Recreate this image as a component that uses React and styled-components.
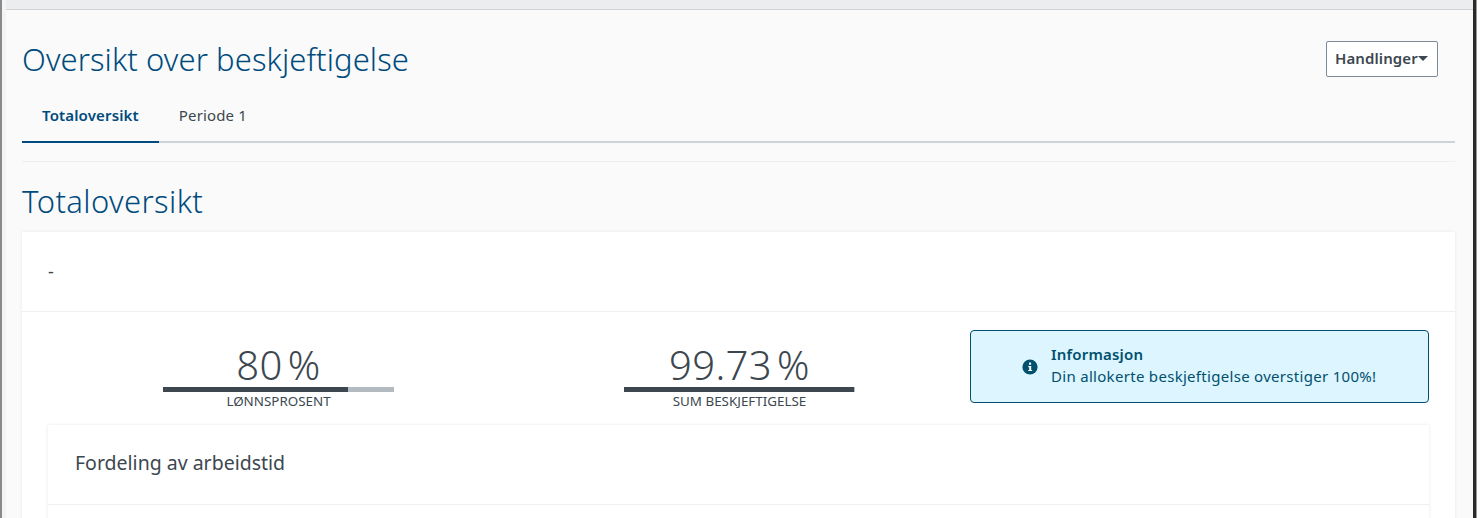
import styled, { createGlobalStyle } from "styled-components";

const GlobalStyle = createGlobalStyle`
  html, body {
    margin: 0;
    padding: 0;
    height: 518px;
    overflow: hidden;
    background: #fff;
    font-family: "Noto Sans", "Open Sans", sans-serif;
  }
`;

const Frame = styled.div`
  height: 518px;
  overflow: hidden;
  display: flex;
  padding-left: 6px;
  padding-right: 4px;
  background: linear-gradient(
    to right,
    #8a8a8a 2px,
    #f4f4f4 2px,
    #f4f4f4 6px,
    #2b2b2b 6px,
    #2b2b2b 1476px,
    #9a9a9a 1476px
  );
`;

const Page = styled.main`
  flex: 1;
  min-width: 0;
  background: #fafafa;
  padding: 0 18px 0 16px;
  border-top: 9px solid #ecedef;
`;

const HeaderRow = styled.div`
  display: flex;
  justify-content: space-between;
  align-items: flex-start;
  border-top: 1px solid #d0d3d6;
  margin: 0 -18px 0 -16px;
  padding: 31px 35px 0 16px;
  height: 52px;
`;

const Title = styled.h1`
  margin: -1px 0 0;
  font-family: "Noto Sans", sans-serif;
  font-weight: 300;
  font-size: 31px;
  line-height: 38px;
  letter-spacing: 0.08px;
  color: #004b7d;
`;

const ActionButton = styled.button`
  display: flex;
  align-items: center;
  height: 36px;
  width: 112px;
  padding: 0 0 3px 8px;
  background: #fff;
  border: 1px solid #7d8b99;
  border-radius: 2px;
  font-family: "Noto Sans", sans-serif;
  font-size: 15px;
  font-weight: 600;
  letter-spacing: 0.1px;
  color: #3c474f;
`;

const Caret = styled.span`
  width: 0;
  height: 0;
  border-left: 5px solid transparent;
  border-right: 5px solid transparent;
  border-top: 5px solid #3c474f;
  margin-top: 2px;
`;

const Tabs = styled.nav`
  display: flex;
  height: 48px;
  border-bottom: 2px solid #d0d3d6;
`;

const Tab = styled.a`
  display: flex;
  align-items: center;
  height: 43px;
  padding: 0 20px 5px;
  font-size: 15px;
  font-weight: ${(p) => (p.$active ? 600 : 400)};
  letter-spacing: 0.15px;
  color: ${(p) => (p.$active ? "#004b7d" : "#3c474f")};
  border-bottom: 2px solid ${(p) => (p.$active ? "#004b7d" : "transparent")};
  box-sizing: content-box;
`;

const Divider = styled.hr`
  margin: 18px 0 0;
  border: 0;
  border-top: 1px solid #eeeff0;
`;

const SectionTitle = styled.h2`
  margin: 19px 0 11px;
  font-family: "Noto Sans", sans-serif;
  font-weight: 300;
  font-size: 31px;
  line-height: 40px;
  letter-spacing: 0.4px;
  color: #004b7d;
`;

const Card = styled.section`
  background: #fff;
  box-shadow: 0 0 3px rgba(0, 0, 0, 0.08);
`;

const CardHead = styled.div`
  height: 77px;
  display: flex;
  align-items: center;
  padding: 0 26px 2px;
  font-size: 18px;
  color: #3c474f;
  border-bottom: 1px solid #eeeff0;
`;

const CardBody = styled.div`
  padding: 18px 26px 0 26px;
`;

const Stats = styled.div`
  display: grid;
  grid-template-columns: 1fr 1fr 459px;
  height: 95px;
`;

const Stat = styled.div`
  display: flex;
  flex-direction: column;
  align-items: center;
  padding-top: 13px;
`;

const StatValue = styled.div`
  font-size: 40px;
  font-weight: 300;
  line-height: 44px;
  letter-spacing: 0.4px;
  color: #3c474f;
`;

const Unit = styled.span`
  margin-left: 5px;
`;

const Track = styled.div`
  width: 231px;
  height: 5px;
  background: #b3bbc1;
`;

const Fill = styled.div`
  height: 100%;
  background: #3c474f;
`;

const StatLabel = styled.div`
  margin-top: 1px;
  font-size: 13.4px;
  line-height: 16px;
  color: #3c474f;
`;

const Notice = styled.div`
  height: 73px;
  box-sizing: border-box;
  display: flex;
  align-items: center;
  gap: 13px;
  padding-left: 51px;
  background: #dcf5fe;
  border: 1px solid #00506e;
  border-radius: 4px;
  color: #00506e;
  font-size: 15px;
  line-height: 22px;
`;

const NoticeBody = styled.div`
  padding-bottom: 4px;
`;

const NoticeTitle = styled.div`
  font-weight: 600;
  letter-spacing: 0.2px;
`;

const NoticeText = styled.div`
  letter-spacing: 0.3px;
`;

const SubCard = styled.section`
  background: #fff;
  box-shadow: 0 0 3px rgba(0, 0, 0, 0.1);
`;

const SubHead = styled.div`
  height: 75px;
  display: flex;
  align-items: center;
  padding: 0 27px 4px;
  font-size: 19.5px;
  color: #3c474f;
  border-bottom: 1px solid #eeeff0;
`;

const SubBody = styled.div`
  height: 60px;
`;

function InfoIcon() {
  return (
    <svg width="16" height="16" viewBox="0 0 16 16" aria-hidden="true">
      <circle cx="8" cy="8" r="7.6" fill="#00506e" />
      <rect x="7" y="3.6" width="2.1" height="2.1" fill="#fff" />
      <path d="M6.3 7h2.9v3.9h.9v1.2H6.2v-1.2h1V8.2h-.9z" fill="#fff" />
    </svg>
  );
}

function StatBlock({ value, percent, label }) {
  return (
    <Stat>
      <StatValue>
        {value}
        <Unit>%</Unit>
      </StatValue>
      <Track>
        <Fill style={{ width: `${percent}%` }} />
      </Track>
      <StatLabel>{label}</StatLabel>
    </Stat>
  );
}

export default function App() {
  return (
    <>
      <GlobalStyle />
      <Frame>
        <Page>
          <HeaderRow>
            <Title>Oversikt over beskjeftigelse</Title>
            <ActionButton>
              Handlinger
              <Caret />
            </ActionButton>
          </HeaderRow>
          <Tabs>
            <Tab $active>Totaloversikt</Tab>
            <Tab>Periode 1</Tab>
          </Tabs>
          <Divider />
          <SectionTitle>Totaloversikt</SectionTitle>
          <Card>
            <CardHead>-</CardHead>
            <CardBody>
              <Stats>
                <StatBlock value="80" percent={80} label="LØNNSPROSENT" />
                <StatBlock value="99.73" percent={99.73} label="SUM BESKJEFTIGELSE" />
                <Notice>
                  <InfoIcon />
                  <NoticeBody>
                    <NoticeTitle>Informasjon</NoticeTitle>
                    <NoticeText>Din allokerte beskjeftigelse overstiger 100%!</NoticeText>
                  </NoticeBody>
                </Notice>
              </Stats>
              <SubCard>
                <SubHead>Fordeling av arbeidstid</SubHead>
                <SubBody />
              </SubCard>
            </CardBody>
          </Card>
        </Page>
      </Frame>
    </>
  );
}
